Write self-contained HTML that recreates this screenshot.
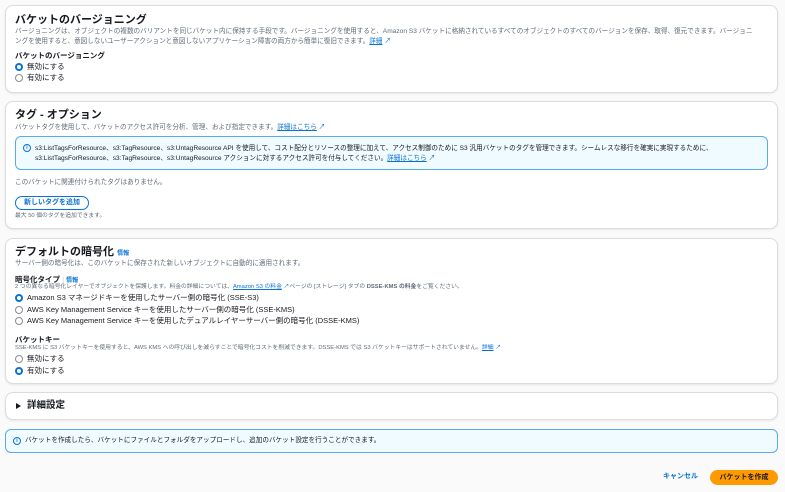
<!DOCTYPE html>
<html><head><meta charset="utf-8"><style>
*{margin:0;padding:0;box-sizing:border-box}
body{width:785px;height:492px;background:#fafafa;font-family:"Liberation Sans","Noto Sans CJK JP",sans-serif;color:#16191f;position:relative;overflow:hidden}
.p{position:absolute;left:5px;width:773px;background:#fff;border:1px solid #dcdcdc;border-radius:8px;box-shadow:0 1px 2px rgba(0,0,0,.08)}
.a{position:absolute;white-space:nowrap;line-height:1.15}
.h{font-size:11px;font-weight:bold;line-height:12px}
.d{font-size:6.6px;color:#5f6b7a;line-height:10px}
.l{font-size:7.5px;font-weight:bold;line-height:9px}
.s{font-size:5.8px;color:#5f6b7a;line-height:7px}
.r{font-size:7.5px;line-height:9px}
.lk{color:#0972d3;text-decoration:underline}
.rd{position:absolute;width:8px;height:8px;border-radius:50%;border:1px solid #8c8c94;background:#fff}
.rd.on{border:2.5px solid #0972d3}
.al{position:absolute;border:1.5px solid #5aa9ee;background:#f0fbff;border-radius:6px}
.ic{position:absolute;width:8px;height:8px;border:1px solid #0972d3;border-radius:50%;font-size:5px;color:#0972d3;text-align:center;line-height:6px;font-weight:bold}
.info{color:#0972d3;font-size:6px;font-weight:bold}
</style></head><body>
<div class="p" style="top:5px;height:88px"></div>
<div class="a h" style="left:15px;top:14px">バケットのバージョニング</div>
<div class="a d" style="left:15px;top:27px">バージョニングは、オブジェクトの複数のバリアントを同じバケット内に保持する手段です。バージョニングを使用すると、Amazon S3 バケットに格納されているすべてのオブジェクトのすべてのバージョンを保存、取得、復元できます。バージョニ<br>ングを使用すると、意図しないユーザーアクションと意図しないアプリケーション障害の両方から簡単に復旧できます。<span class="lk">詳細</span> <span style="color:#0972d3">↗</span></div>
<div class="a l" style="left:15px;top:51px">バケットのバージョニング</div>
<div class="rd on" style="left:15px;top:63px"></div><div class="a r" style="left:27px;top:62px">無効にする</div>
<div class="rd" style="left:15px;top:74px"></div><div class="a r" style="left:27px;top:73px">有効にする</div>

<div class="p" style="top:101px;height:128px"></div>
<div class="a h" style="left:15px;top:109px">タグ - オプション</div>
<div class="a d" style="left:15px;top:123px">バケットタグを使用して、バケットのアクセス許可を分析、管理、および指定できます。<span class="lk">詳細はこちら</span> <span style="color:#0972d3">↗</span></div>
<div class="al" style="left:15px;top:136px;width:753px;height:34px"></div>
<div class="ic" style="left:23px;top:144px">i</div>
<div class="a d" style="left:35px;top:144px;color:#16191f;line-height:9.5px">s3:ListTagsForResource、s3:TagResource、s3:UntagResource API を使用して、コスト配分とリソースの整理に加えて、アクセス制御のために S3 汎用バケットのタグを管理できます。シームレスな移行を確実に実現するために、<br>s3:ListTagsForResource、s3:TagResource、s3:UntagResource アクションに対するアクセス許可を付与してください。<span class="lk">詳細はこちら</span> <span style="color:#0972d3">↗</span></div>
<div class="a d" style="left:15px;top:178px">このバケットに関連付けられたタグはありません。</div>
<div class="a" style="left:15px;top:196px;width:74px;height:14px;border:1.5px solid #0972d3;border-radius:8px;font-size:7px;font-weight:bold;color:#0972d3;text-align:center;line-height:11px">新しいタグを追加</div>
<div class="a s" style="left:15px;top:213px">最大 50 個のタグを追加できます。</div>

<div class="p" style="top:238px;height:146px"></div>
<div class="a h" style="left:15px;top:246px">デフォルトの暗号化 <span class="info">情報</span></div>
<div class="a d" style="left:15px;top:259px">サーバー側の暗号化は、このバケットに保存された新しいオブジェクトに自動的に適用されます。</div>
<div class="a l" style="left:15px;top:275px">暗号化タイプ <span style="color:#ccc;font-weight:normal">|</span> <span class="info">情報</span></div>
<div class="a s" style="left:15px;top:284px">2 つの異なる暗号化レイヤーでオブジェクトを保護します。料金の詳細については、<span class="lk">Amazon S3 の料金</span> <span style="color:#0972d3">↗</span>ページの [ストレージ] タブの <b>DSSE-KMS の料金</b>をご覧ください。</div>
<div class="rd on" style="left:15px;top:294px"></div><div class="a r" style="left:27px;top:293px">Amazon S3 マネージドキーを使用したサーバー側の暗号化 (SSE-S3)</div>
<div class="rd" style="left:15px;top:306px"></div><div class="a r" style="left:27px;top:305px">AWS Key Management Service キーを使用したサーバー側の暗号化 (SSE-KMS)</div>
<div class="rd" style="left:15px;top:317px"></div><div class="a r" style="left:27px;top:316px">AWS Key Management Service キーを使用したデュアルレイヤーサーバー側の暗号化 (DSSE-KMS)</div>
<div class="a l" style="left:15px;top:335px">バケットキー</div>
<div class="a s" style="left:15px;top:345px">SSE-KMS に S3 バケットキーを使用すると、AWS KMS への呼び出しを減らすことで暗号化コストを削減できます。DSSE-KMS では S3 バケットキーはサポートされていません。<span class="lk">詳細</span> <span style="color:#0972d3">↗</span></div>
<div class="rd" style="left:15px;top:355px"></div><div class="a r" style="left:27px;top:354px">無効にする</div>
<div class="rd on" style="left:15px;top:367px"></div><div class="a r" style="left:27px;top:366px">有効にする</div>

<div class="p" style="top:392px;height:28px"></div>
<div class="a" style="left:16px;top:403px;width:0;height:0;border-left:5px solid #16191f;border-top:3.5px solid transparent;border-bottom:3.5px solid transparent"></div>
<div class="a" style="left:27px;top:400px;font-size:9.5px;font-weight:bold;line-height:12px">詳細設定</div>

<div class="al" style="left:5px;top:429px;width:773px;height:24px"></div>
<div class="ic" style="left:13px;top:437px">i</div>
<div class="a d" style="left:25px;top:436px;color:#16191f">バケットを作成したら、バケットにファイルとフォルダをアップロードし、追加のバケット設定を行うことができます。</div>

<div class="a" style="left:663px;top:473px;font-size:7px;font-weight:bold;color:#0972d3">キャンセル</div>
<div class="a" style="left:710px;top:470px;width:68px;height:15px;background:#ff9900;border-radius:8px;font-size:7px;font-weight:bold;text-align:center;line-height:15px">バケットを作成</div>
</body></html>
